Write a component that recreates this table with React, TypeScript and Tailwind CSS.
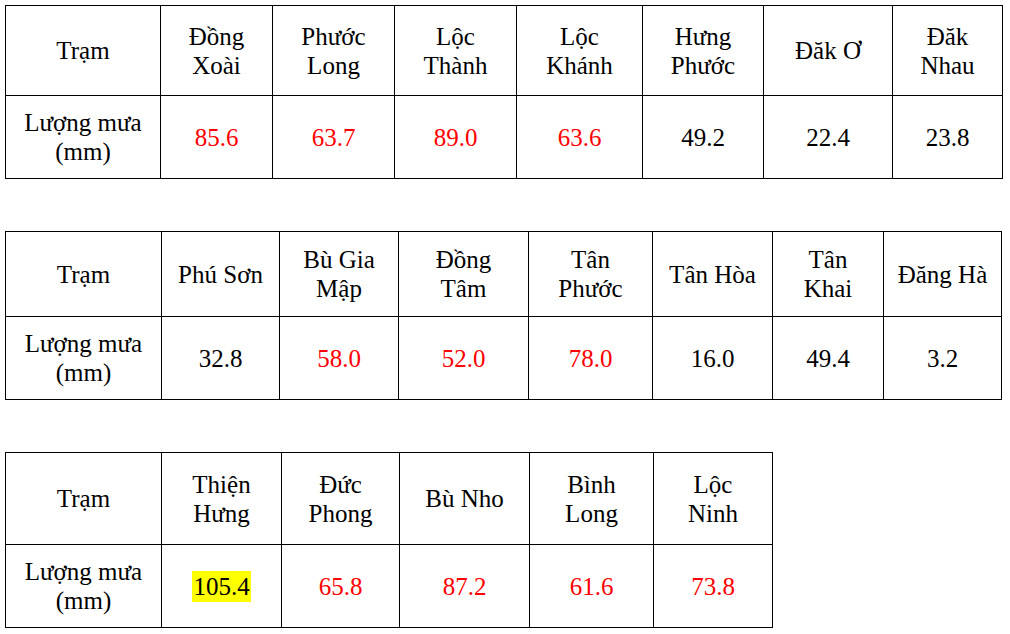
import React from 'react';

type Cell = { name: string[]; value: string; red?: boolean; mark?: boolean };

interface RainTableProps {
  cols: string;
  headH: string;
  cells: Cell[];
}

const tables: { cols: string; headH: string; cells: Cell[] }[] = [
  {
    cols: 'grid-cols-[155px_112px_122px_122px_126px_121px_129px_110px]',
    headH: 'h-[90px]',
    cells: [
      { name: ['Đồng', 'Xoài'], value: '85.6', red: true },
      { name: ['Phước', 'Long'], value: '63.7', red: true },
      { name: ['Lộc', 'Thành'], value: '89.0', red: true },
      { name: ['Lộc', 'Khánh'], value: '63.6', red: true },
      { name: ['Hưng', 'Phước'], value: '49.2' },
      { name: ['Đăk Ơ'], value: '22.4' },
      { name: ['Đăk', 'Nhau'], value: '23.8' },
    ],
  },
  {
    cols: 'grid-cols-[156px_118px_119px_130px_124px_120px_111px_118px]',
    headH: 'h-[85px]',
    cells: [
      { name: ['Phú Sơn'], value: '32.8' },
      { name: ['Bù Gia', 'Mập'], value: '58.0', red: true },
      { name: ['Đồng', 'Tâm'], value: '52.0', red: true },
      { name: ['Tân', 'Phước'], value: '78.0', red: true },
      { name: ['Tân Hòa'], value: '16.0' },
      { name: ['Tân', 'Khai'], value: '49.4' },
      { name: ['Đăng Hà'], value: '3.2' },
    ],
  },
  {
    cols: 'grid-cols-[156px_120px_118px_130px_124px_119px]',
    headH: 'h-[92px]',
    cells: [
      { name: ['Thiện', 'Hưng'], value: '105.4', mark: true },
      { name: ['Đức', 'Phong'], value: '65.8', red: true },
      { name: ['Bù Nho'], value: '87.2', red: true },
      { name: ['Bình', 'Long'], value: '61.6', red: true },
      { name: ['Lộc', 'Ninh'], value: '73.8', red: true },
    ],
  },
];

const cellCls =
  'flex flex-col items-center justify-center text-center border-r border-b border-black';

const RainTable: React.FC<RainTableProps> = ({ cols, headH, cells }) => {
  return (
    <div className={`grid ${cols} w-max border-l border-t border-black`}>
      <div className={`${cellCls} ${headH}`}>Trạm</div>
      {cells.map((c, i) => (
        <div key={'h' + i} className={`${cellCls} ${headH}`}>
          {c.name.map((n) => (
            <span key={n}>{n}</span>
          ))}
        </div>
      ))}
      <div className={`${cellCls} h-[83px]`}>
        <span>Lượng mưa</span>
        <span>(mm)</span>
      </div>
      {cells.map((c, i) => (
        <div key={'v' + i} className={`${cellCls} h-[83px]`}>
          {c.mark ? (
            <span className="bg-[#ffff00] px-px py-px text-black">{c.value}</span>
          ) : (
            <span className={c.red ? 'text-[#ff0000]' : 'text-black'}>{c.value}</span>
          )}
        </div>
      ))}
    </div>
  );
};

export default function App() {
  return (
    <div className="flex h-[634px] w-[1010px] flex-col gap-[52px] bg-white pl-[5px] pt-[5px] font-['Liberation_Serif'] text-[25px] leading-[29px] text-black">
      {tables.map((t, i) => (
        <RainTable key={i} cols={t.cols} headH={t.headH} cells={t.cells} />
      ))}
    </div>
  );
}
